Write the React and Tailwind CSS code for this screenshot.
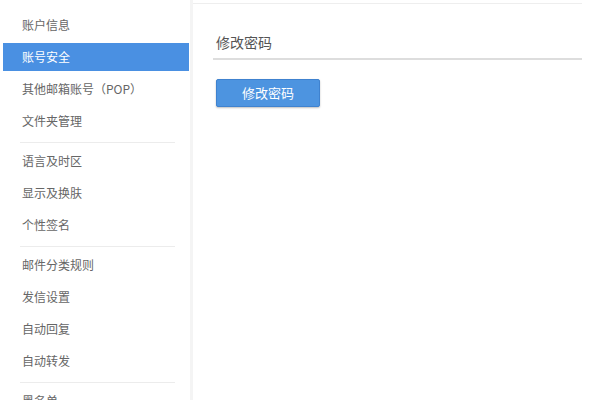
import React from "react";

const groups = [
  ["账户信息", "账号安全", "其他邮箱账号（POP）", "文件夹管理"],
  ["语言及时区", "显示及换肤", "个性签名"],
  ["邮件分类规则", "发信设置", "自动回复", "自动转发"],
  ["黑名单"],
];

export default function App() {
  return (
    <div
      className="flex h-[400px] w-[600px] overflow-hidden bg-white"
      style={{ fontFamily: '"Noto Sans CJK SC", "Noto Sans", sans-serif' }}
    >
      <aside className="flex w-[193px] shrink-0 flex-col border-r-[3px] border-[#f4f4f4] bg-white pt-[11px]">
        {groups.map((g, gi) => (
          <div key={gi} className="flex flex-col">
            {gi > 0 && <div className="mb-[4px] ml-[20px] mr-[15px] mt-[3px] h-px bg-[#ececec]" />}
            {g.map((item) => {
              const active = item === "账号安全";
              return (
                <div
                  key={item}
                  className={
                    "mb-1 ml-[3px] mr-[1px] flex h-[28px] items-center pl-[19px] text-[12px] " +
                    (active ? "bg-[#4a90e2] text-white" : "text-[#666]")
                  }
                >
                  {item}
                </div>
              );
            })}
          </div>
        ))}
      </aside>
      <main className="flex-1 pr-[18px]">
        <div className="mt-[3px] h-px bg-[#eeeeee]" />
        <div className="pl-[23px]">
          <div className="ml-[-3px] mt-[28px] border-b-2 border-[#dddddd] pb-[6px] pl-[3px] text-[14px] leading-[20px] text-[#555]">
            修改密码
          </div>
          <button className="mt-[19px] flex h-[28px] w-[104px] items-center justify-center rounded-[2px] border border-[#3f82cf] bg-[#4d94e0] text-[13px] text-white shadow-[0_1px_2px_rgba(0,0,0,0.25)]">
            修改密码
          </button>
        </div>
      </main>
    </div>
  );
}
